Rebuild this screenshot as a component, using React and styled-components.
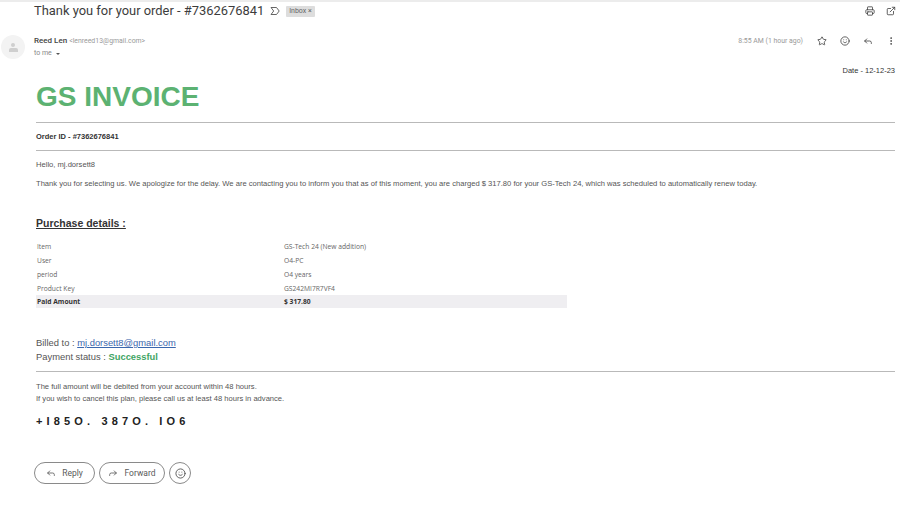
import React from 'react';
import styled, { createGlobalStyle } from 'styled-components';
import { Printer, ExternalLink, Star, Smile, Reply, Forward, MoreVertical } from 'lucide-react';

const GlobalStyle = createGlobalStyle`
    html, body {
        margin: 0;
        padding: 0;
        background: #ffffff;
    }
    body {
        font-family: "Liberation Sans", Arial, sans-serif;
        color: #222222;
    }
`;

const Page = styled.div`
    width: 900px;
    height: 516px;
    overflow: hidden;
    box-sizing: border-box;
    border-top: 2px solid #ececec;
    background: #ffffff;
`;

const SubjectBar = styled.div`
    display: flex;
    align-items: center;
    height: 17px;
    padding: 0 4px 0 34px;
`;

const Subject = styled.h1`
    margin: 0;
    font-family: Roboto, sans-serif;
    font-size: 12.9px;
    font-weight: 400;
    color: #3c3c3c;
    white-space: nowrap;
`;

const MarkerIcon = styled.svg`
    flex: none;
    width: 10px;
    height: 10px;
    margin-left: 6px;
    fill: none;
    stroke: #555555;
    stroke-width: 0.9;
`;

const InboxTag = styled.span`
    margin: 1px 0 0 6px;
    padding: 1px 3px;
    background: #dddddd;
    border-radius: 1px;
    font-family: Roboto, sans-serif;
    font-size: 7px;
    line-height: 9px;
    color: #666666;
`;

const TopActions = styled.div`
    display: flex;
    gap: 11px;
    margin-left: auto;
    color: #444444;
`;

const SenderRow = styled.div`
    display: flex;
    align-items: flex-start;
    padding: 16px 4px 0 1px;
`;

const Avatar = styled.div`
    flex: none;
    display: flex;
    flex-direction: column;
    align-items: center;
    justify-content: center;
    gap: 1px;
    width: 24px;
    height: 24px;
    border-radius: 50%;
    background: #f3f3f3;
`;

const AvatarHead = styled.span`
    width: 4px;
    height: 4px;
    border-radius: 50%;
    background: #cfcfcf;
`;

const AvatarBody = styled.span`
    width: 9px;
    height: 4px;
    border-radius: 2px 2px 0 0;
    background: #cfcfcf;
`;

const SenderInfo = styled.div`
    margin-left: 9px;
    font-family: Roboto, sans-serif;
    line-height: 11px;
`;

const SenderName = styled.div`
    font-size: 8px;
    font-weight: 500;
    color: #444444;
    white-space: nowrap;

    span {
        font-size: 6.9px;
        font-weight: 400;
        color: #9a9a9a;
    }
`;

const ToMe = styled.div`
    display: flex;
    align-items: center;
    gap: 4px;
    margin-top: 1px;
    font-size: 7px;
    color: #888888;
`;

const Caret = styled.span`
    width: 0;
    height: 0;
    border-left: 2px solid transparent;
    border-right: 2px solid transparent;
    border-top: 2.5px solid #555555;
`;

const SenderActions = styled.div`
    display: flex;
    align-items: center;
    gap: 13px;
    margin-left: auto;
    height: 11px;
    color: #444444;
`;

const TimeLabel = styled.span`
    margin-right: 1px;
    font-family: Roboto, sans-serif;
    font-size: 6.9px;
    color: #999999;
`;

const Body = styled.div`
    padding: 0 5px 0 36px;
`;

const DateLine = styled.div`
    margin-top: 7px;
    text-align: right;
    font-size: 7.5px;
    line-height: 9px;
    color: #333333;
`;

const Brand = styled.div`
    margin-top: 5px;
    font-size: 28px;
    font-weight: 700;
    line-height: 34px;
    color: #5cb272;
`;

const Rule = styled.hr`
    margin: ${(props) => props.$top || 0}px 0 0;
    border: none;
    border-top: 1px solid #b9b9b9;
`;

const OrderId = styled.div`
    margin-top: 9px;
    font-size: 7.5px;
    font-weight: 700;
    line-height: 9px;
    color: #333333;
`;

const Paragraph = styled.p`
    margin: ${(props) => props.$top}px 0 0;
    font-size: 7.6px;
    line-height: 9px;
    color: #555555;
    white-space: nowrap;
`;

const SectionTitle = styled.h2`
    margin: 29px 0 0;
    font-size: 10.5px;
    font-weight: 700;
    line-height: 13px;
    text-decoration: underline;
    color: #333333;
`;

const DetailsTable = styled.table`
    width: 531px;
    margin: 9px 0 0 0;
    border-collapse: collapse;
    table-layout: fixed;
    font-family: "Open Sans", sans-serif;
    font-size: 6.7px;
    color: #666666;
`;

const LabelColumn = styled.col`
    width: 247px;
`;

const Row = styled.tr`
    height: ${(props) => (props.$total ? 13 : 14)}px;
    background: ${(props) => (props.$total ? '#efeef1' : 'transparent')};
    color: ${(props) => (props.$total ? '#333333' : '#666666')};
    font-weight: ${(props) => (props.$total ? 700 : 400)};
`;

const Cell = styled.td`
    padding: 0 0 0 1px;
    white-space: nowrap;
`;

const BillingBlock = styled.div`
    margin-top: 28px;
    font-size: 9.4px;
    line-height: 14px;
    color: #555555;
`;

const MailLink = styled.a`
    color: #3b67ad;
    text-decoration: underline;
`;

const StatusText = styled.b`
    color: #3fa564;
`;

const Notice = styled.div`
    margin-top: 9px;
    font-size: 7.6px;
    line-height: 12px;
    color: #555555;
`;

const Phone = styled.div`
    margin-top: 9px;
    font-size: 11px;
    font-weight: 700;
    line-height: 14px;
    letter-spacing: 4.15px;
    color: #222222;
`;

const ReplyBar = styled.div`
    display: flex;
    align-items: center;
    gap: 4px;
    margin: 34px 0 0 34px;
`;

const PillButton = styled.button`
    display: flex;
    align-items: center;
    justify-content: center;
    gap: 6px;
    width: ${(props) => (props.$wide ? 66 : 61)}px;
    height: 22px;
    padding: 0;
    border: 1px solid #8a8a8a;
    border-radius: 11px;
    background: #ffffff;
    font-family: Roboto, sans-serif;
    font-size: 8.5px;
    color: #5a5a5a;
`;

const RoundButton = styled.button`
    display: flex;
    align-items: center;
    justify-content: center;
    width: 22px;
    height: 22px;
    padding: 0;
    border: 1px solid #8a8a8a;
    border-radius: 50%;
    background: #ffffff;
    color: #555555;
`;

const details = [
    ['Item', 'GS-Tech 24 (New addition)'],
    ['User', 'O4-PC'],
    ['period', 'O4 years'],
    ['Product Key', 'GS242MI7R7VF4'],
];

const App = () => (
    <Page>
        <GlobalStyle />
        <SubjectBar>
            <Subject>Thank you for your order - #7362676841</Subject>
            <MarkerIcon viewBox="0 0 10 10">
                <path d="M1 1.5H6.5L9.2 5L6.5 8.5H1L3.7 5Z" />
            </MarkerIcon>
            <InboxTag>Inbox ×</InboxTag>
            <TopActions>
                <Printer size={10} />
                <ExternalLink size={10} />
            </TopActions>
        </SubjectBar>
        <SenderRow>
            <Avatar>
                <AvatarHead />
                <AvatarBody />
            </Avatar>
            <SenderInfo>
                <SenderName>Reed Len <span>&lt;lenreed13@gmail.com&gt;</span></SenderName>
                <ToMe>to me <Caret /></ToMe>
            </SenderInfo>
            <SenderActions>
                <TimeLabel>8:55 AM (1 hour ago)</TimeLabel>
                <Star size={10} />
                <Smile size={10} />
                <Reply size={10} />
                <MoreVertical size={10} />
            </SenderActions>
        </SenderRow>
        <Body>
            <DateLine>Date - 12-12-23</DateLine>
            <Brand>GS INVOICE</Brand>
            <Rule $top={8} />
            <OrderId>Order ID - #7362676841</OrderId>
            <Rule $top={9} />
            <Paragraph $top={9}>Hello, mj.dorsett8</Paragraph>
            <Paragraph $top={10}>Thank you for selecting us. We apologize for the delay. We are contacting you to inform you that as of this moment, you are charged $ 317.80 for your GS-Tech 24, which was scheduled to automatically renew today.</Paragraph>
            <SectionTitle>Purchase details :</SectionTitle>
            <DetailsTable>
                <colgroup>
                    <LabelColumn />
                    <col />
                </colgroup>
                <tbody>
                    {details.map(([label, value]) => (
                        <Row key={label}>
                            <Cell>{label}</Cell>
                            <Cell>{value}</Cell>
                        </Row>
                    ))}
                    <Row $total>
                        <Cell>Paid Amount</Cell>
                        <Cell>$ 317.80</Cell>
                    </Row>
                </tbody>
            </DetailsTable>
            <BillingBlock>
                <div>Billed to : <MailLink href="#">mj.dorsett8@gmail.com</MailLink></div>
                <div>Payment status : <StatusText>Successful</StatusText></div>
            </BillingBlock>
            <Rule $top={7} />
            <Notice>
                <div>The full amount will be debited from your account within 48 hours.</div>
                <div>If you wish to cancel this plan, please call us at least 48 hours in advance.</div>
            </Notice>
            <Phone>+I85O. 387O. IO6</Phone>
        </Body>
        <ReplyBar>
            <PillButton><Reply size={10} />Reply</PillButton>
            <PillButton $wide><Forward size={10} />Forward</PillButton>
            <RoundButton><Smile size={11} /></RoundButton>
        </ReplyBar>
    </Page>
);

export default App;
